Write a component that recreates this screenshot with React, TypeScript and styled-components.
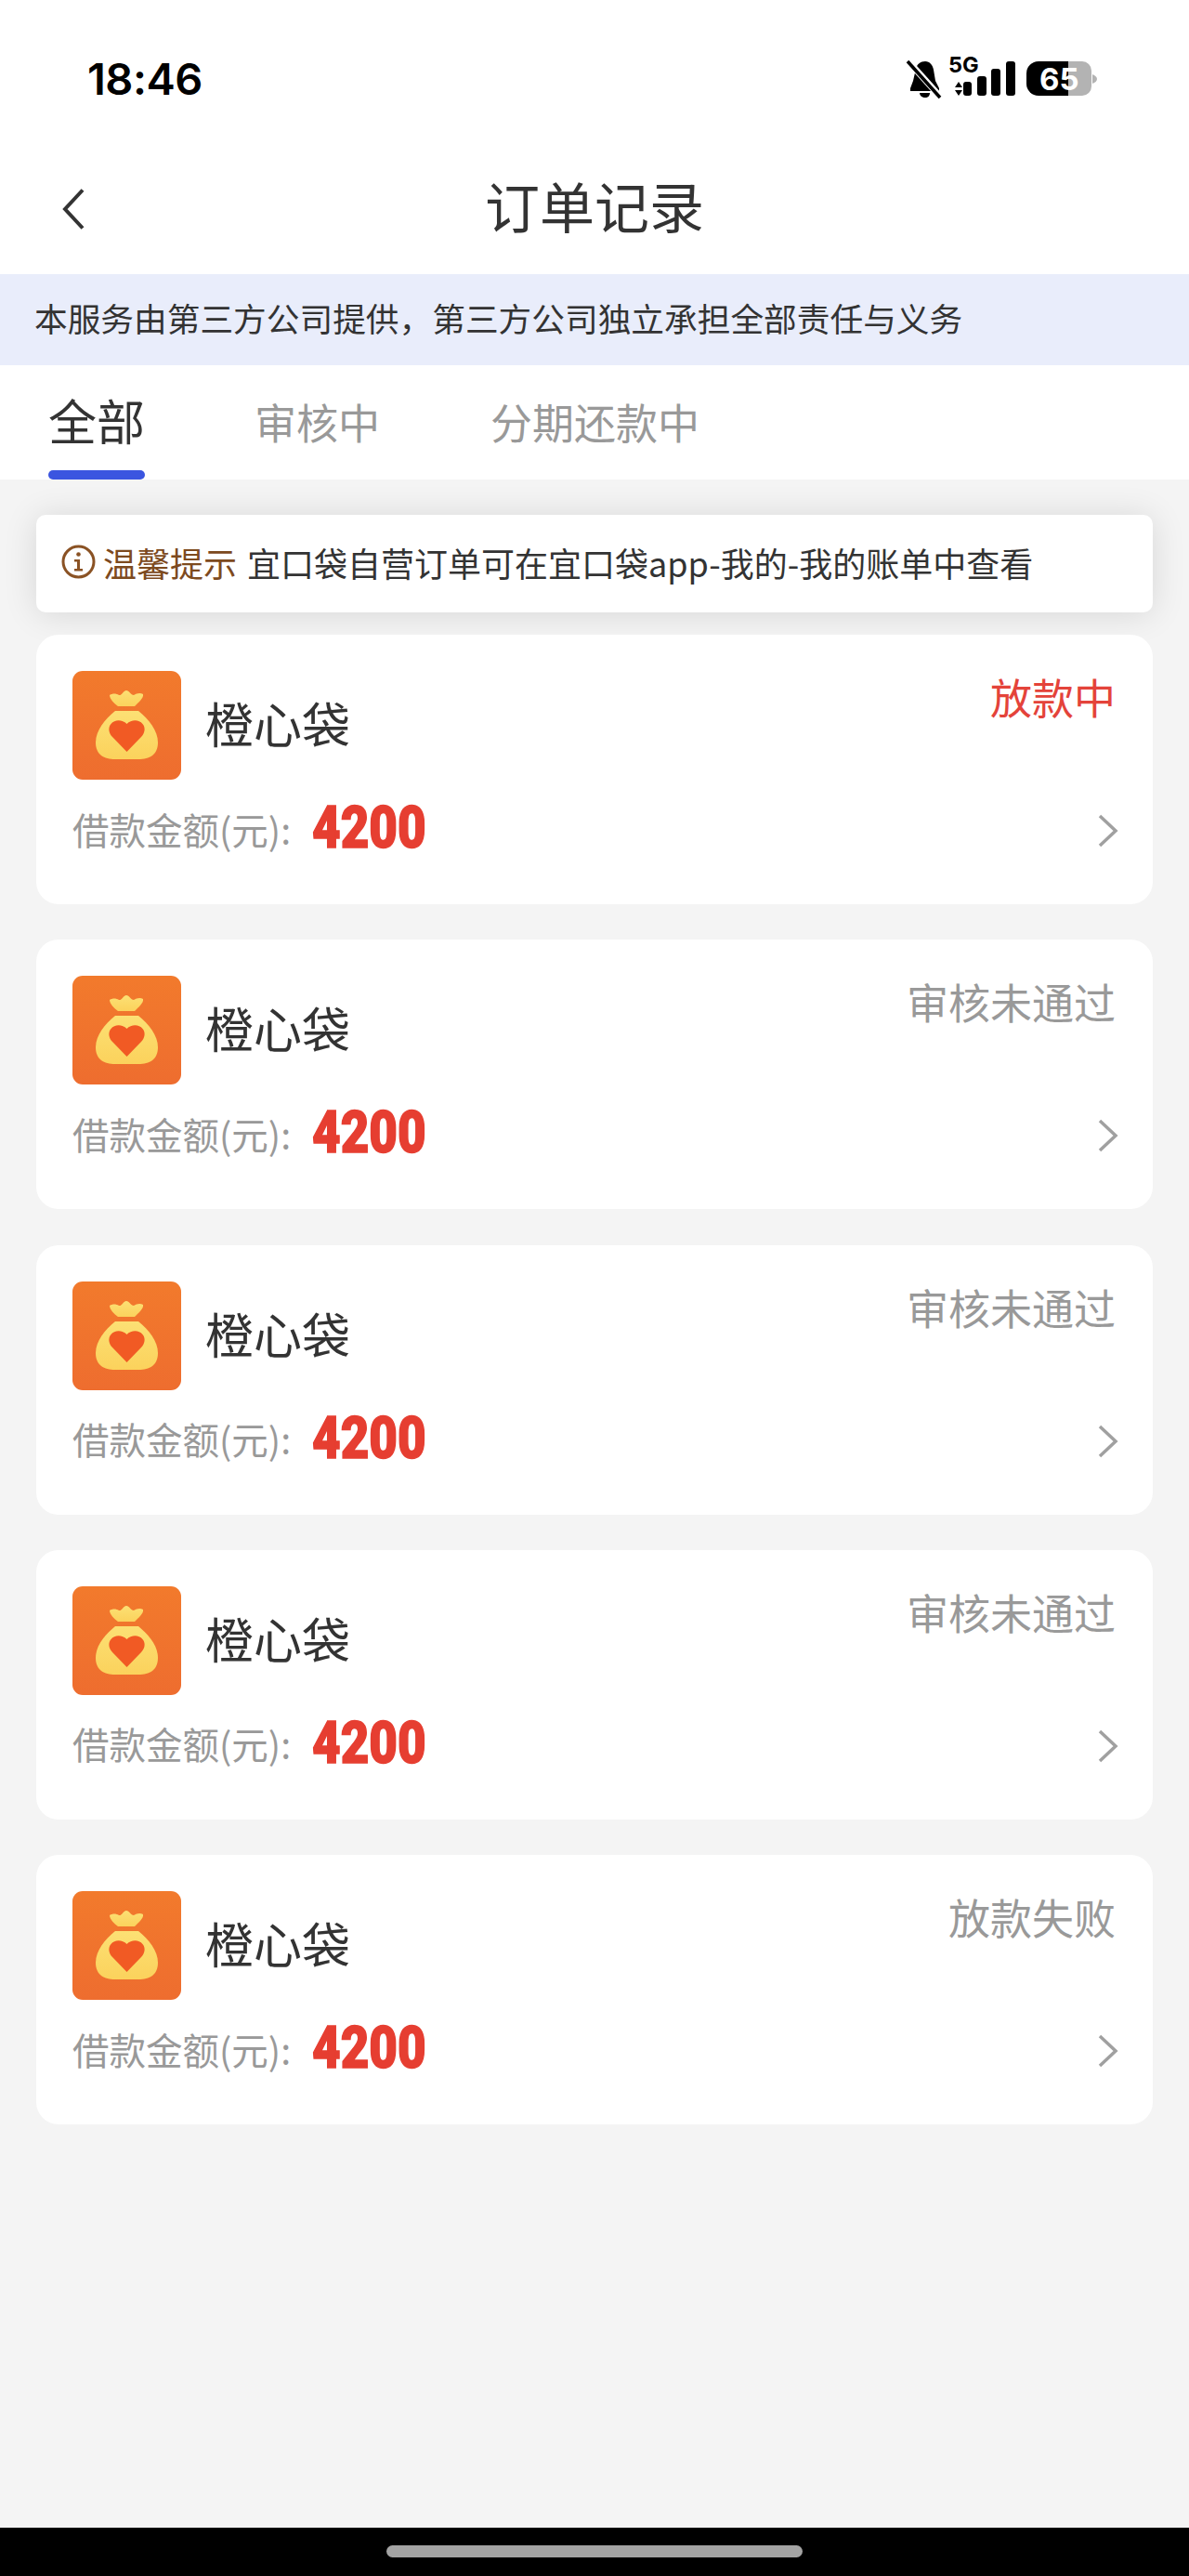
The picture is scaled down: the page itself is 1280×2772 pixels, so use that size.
import React from "react";
import styled, { createGlobalStyle } from "styled-components";

const FONT = `"Noto Sans CJK SC", "Noto Sans", sans-serif`;

const Global = createGlobalStyle`
  html, body { margin: 0; padding: 0; background: #f4f4f4; }
  * { box-sizing: border-box; }
`;

const Page = styled.div`
  width: 1280px;
  height: 2772px;
  display: flex;
  flex-direction: column;
  background: #f4f4f4;
  font-family: ${FONT};
  overflow: hidden;
`;

const StatusBar = styled.div`
  height: 150px;
  padding: 0 90px 0 94px;
  display: flex;
  align-items: flex-start;
  justify-content: space-between;
  background: #fff;
`;

const Time = styled.div`
  margin-top: 60px;
  font-family: "Inter", "Liberation Sans", sans-serif;
  font-size: 47px;
  line-height: 50px;
  font-weight: 600;
  color: #000;
  letter-spacing: -0.5px;
`;

const StatusIcons = styled.svg`
  margin-top: 55px;
  width: 230px;
  height: 55px;
  flex: none;
`;

const NavBar = styled.div`
  height: 145px;
  padding: 0 0 0 67px;
  display: flex;
  align-items: flex-start;
  background: #fff;
  position: relative;
`;

const BackIcon = styled.svg`
  margin-top: 53px;
  width: 24px;
  height: 44px;
`;

const Title = styled.div`
  position: absolute;
  left: 0;
  right: 0;
  top: 31px;
  text-align: center;
  font-size: 59px;
  line-height: 80px;
  color: #333;
`;

const Band = styled.div`
  height: 98px;
  padding: 0 0 6px 37px;
  display: flex;
  align-items: center;
  background: #e9edfb;
  font-size: 35.7px;
  color: #333;
`;

const TabBar = styled.div`
  height: 123px;
  padding-left: 52px;
  display: flex;
  background: #fff;
`;

const Tab = styled.div<{ $active?: boolean; $gap: number }>`
  position: relative;
  margin-right: ${(p) => p.$gap}px;
  height: 123px;
  padding-top: ${(p) => (p.$active ? 24 : 29)}px;
  font-size: ${(p) => (p.$active ? 52 : 45)}px;
  line-height: ${(p) => (p.$active ? 70 : 64)}px;
  color: ${(p) => (p.$active ? "#333" : "#999")};
`;

const TabMark = styled.div`
  position: absolute;
  left: 0;
  right: 0;
  bottom: 0;
  height: 10px;
  border-radius: 5px;
  background: #3b55e0;
`;

const List = styled.div`
  padding: 38px 39px 0;
  display: flex;
  flex-direction: column;
  flex: 1;
`;

const Notice = styled.div`
  height: 105px;
  margin-bottom: 24px;
  padding: 0 0 4px 27px;
  display: flex;
  align-items: center;
  background: #fff;
  border-radius: 10px;
  box-shadow: 0 2px 36px rgba(0, 0, 0, 0.12);
  font-size: 36px;
  color: #333;
`;

const NoticeIcon = styled.svg`
  width: 37px;
  height: 37px;
  margin-right: 8px;
  flex: none;
`;

const NoticeLabel = styled.span`
  color: #7d4a1e;
  margin-right: 11px;
`;

const Card = styled.div`
  height: 290px;
  margin-bottom: 38.25px;
  padding: 39px 40px 0 39px;
  background: #fff;
  border-radius: 24px;
  position: relative;
  display: flex;
  flex-direction: column;
`;

const TopRow = styled.div`
  display: flex;
  align-items: flex-start;
`;

const Logo = styled.svg`
  width: 117px;
  height: 117px;
  flex: none;
`;

const Name = styled.div`
  margin-left: 26px;
  margin-top: 21px;
  font-size: 52px;
  line-height: 70px;
  color: #333;
`;

const Status = styled.div<{ $danger?: boolean }>`
  margin-left: auto;
  margin-top: -2px;
  font-size: 45px;
  line-height: 60px;
  color: ${(p) => (p.$danger ? "#e4433a" : "#999")};
`;

const BottomRow = styled.div`
  margin-top: 12px;
  display: flex;
  align-items: center;
  height: 80px;
`;

const Label = styled.div`
  font-size: 39.5px;
  color: #999;
  width: 258px;
  white-space: nowrap;
`;

const Amount = styled.div`
  font-family: "Roboto", "Liberation Sans", sans-serif;
  font-size: 63px;
  font-weight: 900;
  line-height: 70px;
  color: #e63e31;
  -webkit-text-stroke: 1.5px #e63e31;
  transform: scaleX(0.84);
  transform-origin: left center;
`;

const Chevron = styled.svg`
  margin-left: auto;
  margin-right: -3px;
  margin-top: 6px;
  width: 22px;
  height: 36px;
`;

const HomeArea = styled.div`
  height: 52px;
  display: flex;
  justify-content: center;
  padding-top: 19px;
  background: #000;
  flex: none;
`;

const HomePill = styled.div`
  width: 448px;
  height: 13px;
  border-radius: 7px;
  background: #a3a3a3;
`;

function StatusGlyphs() {
  return (
    <StatusIcons viewBox="0 0 230 55">
      {/* muted bell */}
      <path d="M36 11c5 0 8 4 9 9l2 12 4 8v3H20v-3l3-8 3-13c1-5 5-8 10-8z" fill="#000" />
      <path d="M30 45h11c0 3-2 5-5 5s-6-2-6-5z" fill="#000" />
      <line x1="17" y1="10" x2="53" y2="50" stroke="#fff" strokeWidth="7" />
      <line x1="17" y1="11" x2="52" y2="50" stroke="#000" strokeWidth="3.500" />
      {/* 5G */}
      <text x="61" y="23" fontFamily="Inter, Liberation Sans, sans-serif" fontWeight="700" fontSize="23.5" fill="#000">5G</text>
      <path d="M72 33l4 6h-8zM72 48l4-6h-8z" fill="#000" />
      {/* bars */}
      <rect x="77" y="33" width="9" height="15" rx="3" fill="#000" />
      <rect x="92" y="27" width="10" height="21" rx="3" fill="#000" />
      <rect x="107" y="19" width="10" height="29" rx="3" fill="#000" />
      <rect x="123" y="11" width="10" height="37" rx="3" fill="#000" />
      {/* battery */}
      <path d="M190 11h-32a13 13 0 0 0-13 13v11a13 13 0 0 0 13 13h32z" fill="#000" />
      <path d="M190 11h15a10 10 0 0 1 10 10v17a10 10 0 0 1-10 10h-15z" fill="#b3b3b3" />
      <path d="M216 25c3 1 5 3 5 5s-2 4-5 5z" fill="#b3b3b3" />
      <text x="159" y="42" fontFamily="Inter, Liberation Sans, sans-serif" fontWeight="700" fontSize="33" fill="#fff">65</text>
    </StatusIcons>
  );
}

function Bag() {
  return (
    <Logo viewBox="0 0 117 117">
      <defs>
        <linearGradient id="bg" x1="0" y1="0" x2="0" y2="1">
          <stop offset="0" stopColor="#f27a2c" />
          <stop offset="1" stopColor="#ee6d2f" />
        </linearGradient>
        <linearGradient id="bag" x1="0" y1="0" x2="0" y2="1">
          <stop offset="0" stopColor="#fce074" />
          <stop offset="1" stopColor="#fbd25c" />
        </linearGradient>
      </defs>
      <rect width="117" height="117" rx="11" fill="url(#bg)" />
      <path d="M40 26c3-2 7-2 10 0 3 1 5-5 8-5s5 5 8 5c3-2 7-3 10-1 1 4-5 9-9 13H49c-4-3-9-8-9-12z" fill="url(#bag)" />
      <path d="M46 43C35 52 25 64 25 77c0 13 9 18 21 18h25c12 0 21-5 21-18 0-13-10-25-21-34z" fill="url(#bag)" />
      <path d="M58.500 87L43 71c-4-4-5-10-1.500-14 4-5 12-5 17 0 5-5 13-5 17 0 3.500 4 2.500 10-1.500 14z" fill="#f15a24" />
    </Logo>
  );
}

const ORDERS = [
  { status: "放款中", danger: true },
  { status: "审核未通过" },
  { status: "审核未通过" },
  { status: "审核未通过" },
  { status: "放款失败" },
];

export default function App() {
  return (
    <Page>
      <Global />
      <StatusBar>
        <Time>18:46</Time>
        <StatusGlyphs />
      </StatusBar>
      <NavBar>
        <BackIcon viewBox="0 0 24 44">
          <path d="M22 1.500L3 22l19 20.500" fill="none" stroke="#333" strokeWidth="4" />
        </BackIcon>
        <Title>订单记录</Title>
      </NavBar>
      <Band>本服务由第三方公司提供，第三方公司独立承担全部责任与义务</Band>
      <TabBar>
        <Tab $active $gap={118}>
          全部
          <TabMark />
        </Tab>
        <Tab $gap={119}>审核中</Tab>
        <Tab $gap={0}>分期还款中</Tab>
      </TabBar>
      <List>
        <Notice>
          <NoticeIcon viewBox="0 0 37 37">
            <circle cx="18.500" cy="18.500" r="16.500" fill="none" stroke="#8a5224" strokeWidth="3" />
            <circle cx="18.500" cy="10.500" r="2.300" fill="#8a5224" />
            <path d="M14 16h6v10h3v2.500h-9V26h3v-7.500h-3z" fill="#8a5224" />
          </NoticeIcon>
          <NoticeLabel>温馨提示</NoticeLabel>
          宜口袋自营订单可在宜口袋app-我的-我的账单中查看
        </Notice>
        {ORDERS.map((o, i) => (
          <Card key={i}>
            <TopRow>
              <Bag />
              <Name>橙心袋</Name>
              <Status $danger={o.danger}>{o.status}</Status>
            </TopRow>
            <BottomRow>
              <Label>借款金额(元):</Label>
              <Amount>4200</Amount>
              <Chevron viewBox="0 0 22 36">
                <path d="M2 2l17 16L2 34" fill="none" stroke="#a0a0a0" strokeWidth="3.500" />
              </Chevron>
            </BottomRow>
          </Card>
        ))}
      </List>
      <HomeArea>
        <HomePill />
      </HomeArea>
    </Page>
  );
}
